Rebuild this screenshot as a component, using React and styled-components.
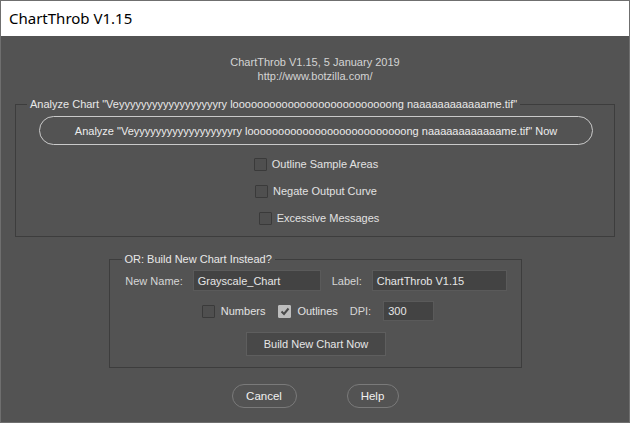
import React from "react";
import styled, { createGlobalStyle } from "styled-components";

const Global = createGlobalStyle`
  html, body { margin: 0; padding: 0; background: #535353; }
  * { box-sizing: border-box; }
`;

const Window = styled.div`
  width: 630px;
  height: 423px;
  border: 1px solid #6f6f6f;
  display: flex;
  flex-direction: column;
  background: #535353;
  font-family: "Liberation Sans", Arial, sans-serif;
  font-size: 11px;
  color: #dedede;
  overflow: hidden;
`;

const TitleBar = styled.div`
  height: 35px;
  flex: none;
  background: #ffffff;
  display: flex;
  align-items: center;
  padding-left: 8px;
  padding-bottom: 2px;
  font-family: "Noto Sans", "Open Sans", sans-serif;
  font-size: 15px;
  color: #000;
`;

const Body = styled.div`
  flex: 1;
  display: flex;
  flex-direction: column;
  padding-top: 19px;
`;

const Header = styled.div`
  text-align: center;
  line-height: 14px;
  color: #d4d4d4;
`;

const Group = styled.fieldset`
  margin: ${(p) => p.$margin};
  padding: ${(p) => p.$padding};
  border: 1px solid #3d3d3d;
  min-width: 0;
  width: ${(p) => p.$width || "auto"};
  align-self: ${(p) => (p.$width ? "center" : "stretch")};
  display: flex;
  flex-direction: column;
  align-items: center;
`;

const Legend = styled.legend`
  padding: 0 3px;
  margin-left: ${(p) => p.$indent};
  line-height: 14px;
  color: #e8e8e8;
  white-space: nowrap;
`;

const PillButton = styled.button`
  font: inherit;
  color: #ececec;
  background: transparent;
  border: 1.5px solid #cacaca;
  border-radius: 15px;
  height: 29px;
  width: 100%;
  padding: 0;
  margin-top: 5px;
  white-space: nowrap;
`;

const CheckRow = styled.label`
  display: flex;
  align-items: center;
  gap: ${(p) => p.$gap || "5px"};
  line-height: 14px;
  white-space: nowrap;
  margin-top: ${(p) => p.$mt || "0"};
  margin-left: ${(p) => p.$ml || "0"};
  color: #e2e2e2;
`;

const Box = styled.span`
  width: 13px;
  height: 13px;
  flex: none;
  border: 1px solid ${(p) => (p.$checked ? "#bdbdbd" : "#3a3a3a")};
  background: ${(p) => (p.$checked ? "#bdbdbd" : "#4f4f4f")};
  border-radius: 1px;
  display: flex;
  align-items: center;
  justify-content: center;
`;

const FormRow = styled.div`
  display: flex;
  align-items: center;
  margin-top: ${(p) => p.$mt};
  margin-left: ${(p) => p.$ml || "0"};
`;

const FieldLabel = styled.span`
  color: #d6d6d6;
  white-space: nowrap;
  margin-right: ${(p) => p.$mr};
  margin-left: ${(p) => p.$ml || "0"};
`;

const Input = styled.div`
  width: ${(p) => p.$w};
  height: ${(p) => p.$h || "21px"};
  flex: none;
  background: #434343;
  border: 1px solid #5a5a5a;
  color: #e6e6e6;
  display: flex;
  align-items: center;
  padding-left: 4px;
  white-space: nowrap;
`;

const FlatButton = styled.button`
  font: inherit;
  color: #e6e6e6;
  width: 140px;
  height: 24px;
  margin-top: 11px;
  background: #484848;
  border: 1px solid #5e5e5e;
  padding: 0;
`;

const Footer = styled.div`
  display: flex;
  justify-content: center;
  gap: 50px;
  margin-top: 16px;
`;

const RoundButton = styled.button`
  font: inherit;
  font-size: 11.5px;
  color: #f0f0f0;
  width: ${(p) => p.$w};
  height: 24px;
  background: transparent;
  border: 1px solid #7a7a7a;
  border-radius: 12px;
  padding: 0;
`;

const Check = () => (
  <svg width="10" height="9" viewBox="0 0 10 9">
    <polyline points="1.5,4.5 4,7 8.5,1.5" fill="none" stroke="#4a4a4a" strokeWidth="2" />
  </svg>
);

const fname = `"Ve${"y".repeat(18)}ry l${"o".repeat(26)}ng n${"a".repeat(12)}me.tif"`;

export default function App() {
  return (
    <>
      <Global />
      <Window>
        <TitleBar>ChartThrob V1.15</TitleBar>
        <Body>
          <Header>
            ChartThrob V1.15, 5 January 2019
            <br />
            http://www.botzilla.com/
          </Header>
          <Group $margin="14px 14px 0 14px" $padding="0 21px 11px 23px">
            <Legend $indent="-12px">Analyze Chart {fname}</Legend>
            <PillButton>Analyze {fname} Now</PillButton>
            <CheckRow $mt="12px">
              <Box />
              Outline Sample Areas
            </CheckRow>
            <CheckRow $mt="13px">
              <Box />
              Negate Output Curve
            </CheckRow>
            <CheckRow $mt="13px" $ml="6px">
              <Box />
              Excessive Messages
            </CheckRow>
          </Group>
          <Group $margin="15px 0 0 0" $padding="0 14px 11px 16px" $width="413px">
            <Legend $indent="-4px">OR: Build New Chart Instead?</Legend>
            <FormRow $mt="4px">
              <FieldLabel $mr="10px">New Name:</FieldLabel>
              <Input $w="128px">Grayscale_Chart</Input>
              <FieldLabel $ml="11px" $mr="10px">Label:</FieldLabel>
              <Input $w="135px">ChartThrob V1.15</Input>
            </FormRow>
            <FormRow $mt="10px" $ml="4px">
              <CheckRow $gap="6px">
                <Box />
                Numbers
              </CheckRow>
              <CheckRow $gap="6px" $ml="13px">
                <Box $checked>
                  <Check />
                </Box>
                Outlines
              </CheckRow>
              <FieldLabel $ml="12px" $mr="12px">DPI:</FieldLabel>
              <Input $w="51px" $h="20px">300</Input>
            </FormRow>
            <FlatButton>Build New Chart Now</FlatButton>
          </Group>
          <Footer>
            <RoundButton $w="65px">Cancel</RoundButton>
            <RoundButton $w="52px">Help</RoundButton>
          </Footer>
        </Body>
      </Window>
    </>
  );
}
